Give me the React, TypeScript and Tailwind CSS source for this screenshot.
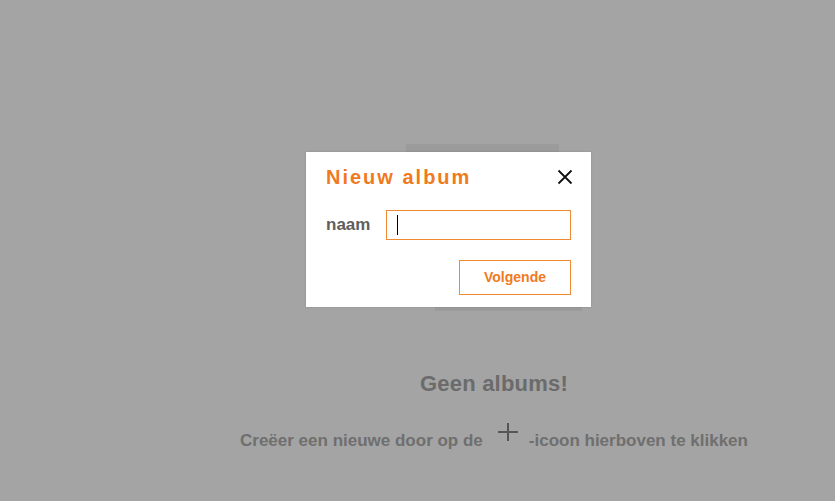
import React from "react";

export default function App() {
  return (
    <div
      className="relative h-[501px] w-[835px] overflow-hidden bg-[#a4a4a4]"
      style={{ fontFamily: '"Liberation Sans", Arial, sans-serif' }}
    >
      {/* background content */}
      <div className="flex flex-col items-center pl-[153px] pt-[370px]">
        <div className="text-[22px] font-bold leading-[28px] tracking-[0.2px] text-[#6b6b6b]">
          Geen albums!
        </div>
        <div className="mt-[30px] flex items-center text-[17px] font-bold text-[#6f6f6f]">
          <span>Creëer een nieuwe door op de</span>
          <span className="ml-[14px] mr-[10px] -mt-[18px] flex h-[22px] w-[22px] items-center justify-center">
            <svg width="22" height="22" viewBox="0 0 22 22">
              <path d="M11 2v18M1 11h20" stroke="#555" strokeWidth="2" />
            </svg>
          </span>
          <span>-icoon hierboven te klikken</span>
        </div>
      </div>

      {/* placeholder shapes behind dialog */}
      <div className="absolute left-[406px] top-[144px] h-[20px] w-[153px] bg-[#9b9b9b]" />
      <div className="absolute left-[435px] top-[290px] h-[21px] w-[147px] bg-[#9b9b9b]" />

      {/* dialog */}
      <div className="absolute left-[306px] top-[152px] h-[155px] w-[285px] bg-white px-[20px] pt-[10px] shadow-[0_0_2px_rgba(0,0,0,0.15)]">
        <div className="flex items-center justify-between">
          <span className="text-[20px] font-bold tracking-[2px] text-[#f07a1e]">
            Nieuw album
          </span>
          <svg width="16" height="16" viewBox="0 0 16 16" className="mr-[-2px] mt-[0px]">
            <path d="M1.5 1.5l13 13M14.5 1.5l-13 13" stroke="#111" strokeWidth="1.8" />
          </svg>
        </div>
        <div className="mt-[18px] flex items-center">
          <span className="w-[60px] text-[17px] font-bold text-[#5f5f5f]">naam</span>
          <div className="flex h-[30px] w-[185px] items-center border border-[#f08a35] pl-[10px]">
            <div className="h-[20px] w-px bg-black" />
          </div>
        </div>
        <div className="mt-[20px] flex justify-end">
          <div className="flex h-[35px] w-[112px] items-center justify-center border border-[#f08a35] text-[14px] font-bold text-[#f07a1e]">
            Volgende
          </div>
        </div>
      </div>
    </div>
  );
}
